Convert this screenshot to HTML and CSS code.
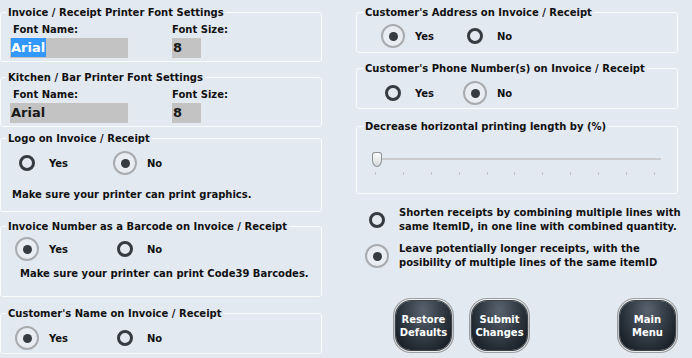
FILE: index.html
```html
<!DOCTYPE html>
<html lang="en">
<head>
  <meta charset="UTF-8">
  <title>Printer Settings</title>
  <link rel="stylesheet" href="styles.css">
</head>
<body>

<div class="page">
  <div class="col">
    <fieldset class="box box-font1">
      <legend>Invoice / Receipt Printer Font Settings</legend>
      <div class="font-row">
        <div class="field">
          <label>Font Name:</label>
          <div class="input name"><span class="selected">Arial</span></div>
        </div>
        <div class="field size">
          <label>Font Size:</label>
          <div class="input size">8</div>
        </div>
      </div>
    </fieldset>

    <fieldset class="box box-font2">
      <legend>Kitchen / Bar Printer Font Settings</legend>
      <div class="font-row">
        <div class="field">
          <label>Font Name:</label>
          <div class="input name">Arial</div>
        </div>
        <div class="field size">
          <label>Font Size:</label>
          <div class="input size">8</div>
        </div>
      </div>
    </fieldset>

    <fieldset class="box box-logo">
      <legend>Logo on Invoice / Receipt</legend>
      <div class="options">
        <div class="option"><span class="radio"></span>Yes</div>
        <div class="option"><span class="radio on"></span>No</div>
      </div>
      <p class="note">Make sure your printer can print graphics.</p>
    </fieldset>

    <fieldset class="box box-barcode">
      <legend>Invoice Number as a Barcode on Invoice / Receipt</legend>
      <div class="options">
        <div class="option"><span class="radio on"></span>Yes</div>
        <div class="option"><span class="radio"></span>No</div>
      </div>
      <p class="note">Make sure your printer can print Code39 Barcodes.</p>
    </fieldset>

    <fieldset class="box box-name">
      <legend>Customer's Name on Invoice / Receipt</legend>
      <div class="options">
        <div class="option"><span class="radio on"></span>Yes</div>
        <div class="option"><span class="radio"></span>No</div>
      </div>
    </fieldset>
  </div>

  <div class="col right">
    <fieldset class="box box-address">
      <legend>Customer's Address on Invoice / Receipt</legend>
      <div class="options short">
        <div class="option"><span class="radio on"></span>Yes</div>
        <div class="option"><span class="radio"></span>No</div>
      </div>
    </fieldset>

    <fieldset class="box box-phone">
      <legend>Customer's Phone Number(s) on Invoice / Receipt</legend>
      <div class="options short">
        <div class="option"><span class="radio"></span>Yes</div>
        <div class="option"><span class="radio on"></span>No</div>
      </div>
    </fieldset>

    <fieldset class="box box-slider">
      <legend>Decrease horizontal printing length by (%)</legend>
      <div class="slider">
        <div class="track"></div>
        <div class="thumb"></div>
        <div class="ticks">
          <span></span><span></span><span></span><span></span><span></span><span></span>
          <span></span><span></span><span></span><span></span><span></span>
        </div>
      </div>
    </fieldset>

    <div class="choice first">
      <span class="radio"></span>
      <div>Shorten receipts by combining multiple lines with<br>same ItemID, in one line with combined quantity.</div>
    </div>
    <div class="choice">
      <span class="radio on"></span>
      <div>Leave potentially longer receipts, with the<br>posibility of multiple lines of the same itemID</div>
    </div>

    <div class="buttons">
      <div class="btn"><span>Restore<br>Defaults</span></div>
      <div class="btn"><span>Submit<br>Changes</span></div>
      <div class="btn menu"><span>Main<br>Menu</span></div>
    </div>
  </div>
</div>

</body>
</html>
```

FILE: styles.css
```css
html, body {
  margin: 0;
  height: 100%;
}
body {
  font-family: 'DejaVu Sans', sans-serif;
  font-size: 10px;
  font-weight: bold;
  line-height: 13px;
  color: #111;
  background: #e3e9f1;
  overflow: hidden;
}
.page {
  display: grid;
  grid-template-columns: 322px 322px;
  column-gap: 34px;
}
.col {
  display: flex;
  flex-direction: column;
}

/* group boxes */
.box {
  margin: 0;
  border: 1px solid #f9fbfd;
  border-radius: 3px;
  padding: 0 5px;
  min-width: 0;
}
.box legend {
  padding: 0 2px;
  line-height: 13px;
}
.right .box {
  padding-left: 6px;
  padding-right: 6px;
}
.box-font1 { margin-top: 6px; padding-top: 4px; padding-bottom: 2px; }
.box-font2 { margin-top: 9px; padding-top: 4px; padding-bottom: 2px; }
.box-logo { margin-top: 5px; padding-top: 6px; padding-bottom: 10px; }
.box-barcode { margin-top: 8px; padding-top: 4px; padding-bottom: 16px; }
.box-name { margin-top: 10px; padding-top: 6px; padding-bottom: 3px; }

.box-address { margin-top: 6px; padding-top: 5px; padding-bottom: 4px; }
.box-phone { margin-top: 9px; padding-top: 6px; padding-bottom: 3px; }
.box-slider { margin-top: 11px; padding-top: 6px; padding-bottom: 18px; }

/* font inputs */
.font-row {
  display: flex;
  gap: 42px;
}
.field label {
  display: block;
  padding-left: 7px;
  margin-bottom: 1px;
}
.field.size label {
  padding-left: 1px;
}
.input {
  height: 22px;
  box-sizing: border-box;
  background: #c3c3c3;
  border: 1px solid #e6e9ee;
  font-size: 13px;
  line-height: 20px;
  padding-left: 1px;
  color: #1a1a1a;
}
.input.name { width: 120px; margin-left: 3px; }
.input.size { width: 31px; }
.selected {
  display: inline-block;
  background: #3398fe;
  color: #fff;
  line-height: 19px;
  padding-right: 1px;
}

/* radios */
.options {
  display: grid;
  grid-template-columns: 98px 98px;
  padding-left: 9px;
}
.options.short {
  grid-template-columns: 82px 82px;
  padding-left: 18px;
}
.option {
  display: flex;
  align-items: center;
  height: 24px;
}
.radio {
  flex: none;
  width: 24px;
  height: 24px;
  margin-right: 10px;
  display: flex;
  align-items: center;
  justify-content: center;
  box-sizing: border-box;
}
.radio::before {
  content: "";
  width: 16px;
  height: 16px;
  box-sizing: border-box;
  border: 3.5px solid #363b42;
  border-radius: 50%;
}
.radio.on {
  border: 2px solid #a9abae;
  border-radius: 50%;
  background: #e9edf2;
}
.radio.on::before {
  width: 9px;
  height: 9px;
  border: none;
  background: #363b42;
}
.note {
  margin: 13px 0 0 6px;
}
.box-barcode .note {
  margin: 6px 0 0 14px;
}

/* slider */
.slider {
  position: relative;
  margin: 0 10px 0 12px;
  padding-top: 19px;
}
.track {
  height: 2px;
  background: #c9cbcd;
}
.thumb {
  position: absolute;
  left: -3px;
  top: 13px;
  width: 10px;
  height: 15px;
  box-sizing: border-box;
  border: 1px solid #8d9196;
  border-radius: 3px 3px 5px 5px / 3px 3px 7px 7px;
  background: linear-gradient(#fdfdfd, #d6d8da);
}
.ticks {
  display: flex;
  justify-content: space-between;
  margin-top: 12px;
  width: 280px;
}
.ticks span {
  width: 1px;
  height: 3px;
  background: #c2c6ca;
}

/* two-line choices */
.choice {
  display: flex;
  align-items: center;
  margin-top: 8px;
  padding-left: 9px;
  line-height: 14px;
  white-space: nowrap;
}
.choice.first {
  margin-top: 12px;
}

/* buttons */
.buttons {
  display: flex;
  margin-top: 28px;
  padding-left: 37px;
  gap: 15px;
}
.btn {
  width: 62px;
  height: 55px;
  box-sizing: border-box;
  padding: 3px;
  border-radius: 18px;
  background: linear-gradient(#f6f6f6, #b4b6b9 50%, #eeeeef);
  box-shadow: inset 0 0 0 1px #9a9da1;
}
.btn span {
  display: flex;
  align-items: center;
  justify-content: center;
  height: 100%;
  border-radius: 15px;
  background: radial-gradient(ellipse at 50% 20%, #59636f, #2a323b 60%, #12161b);
  box-shadow: 0 0 0 1px #3c4249;
  color: #fff;
  text-align: center;
  line-height: 13px;
}
.btn.menu {
  margin-left: 72px;
}
```
